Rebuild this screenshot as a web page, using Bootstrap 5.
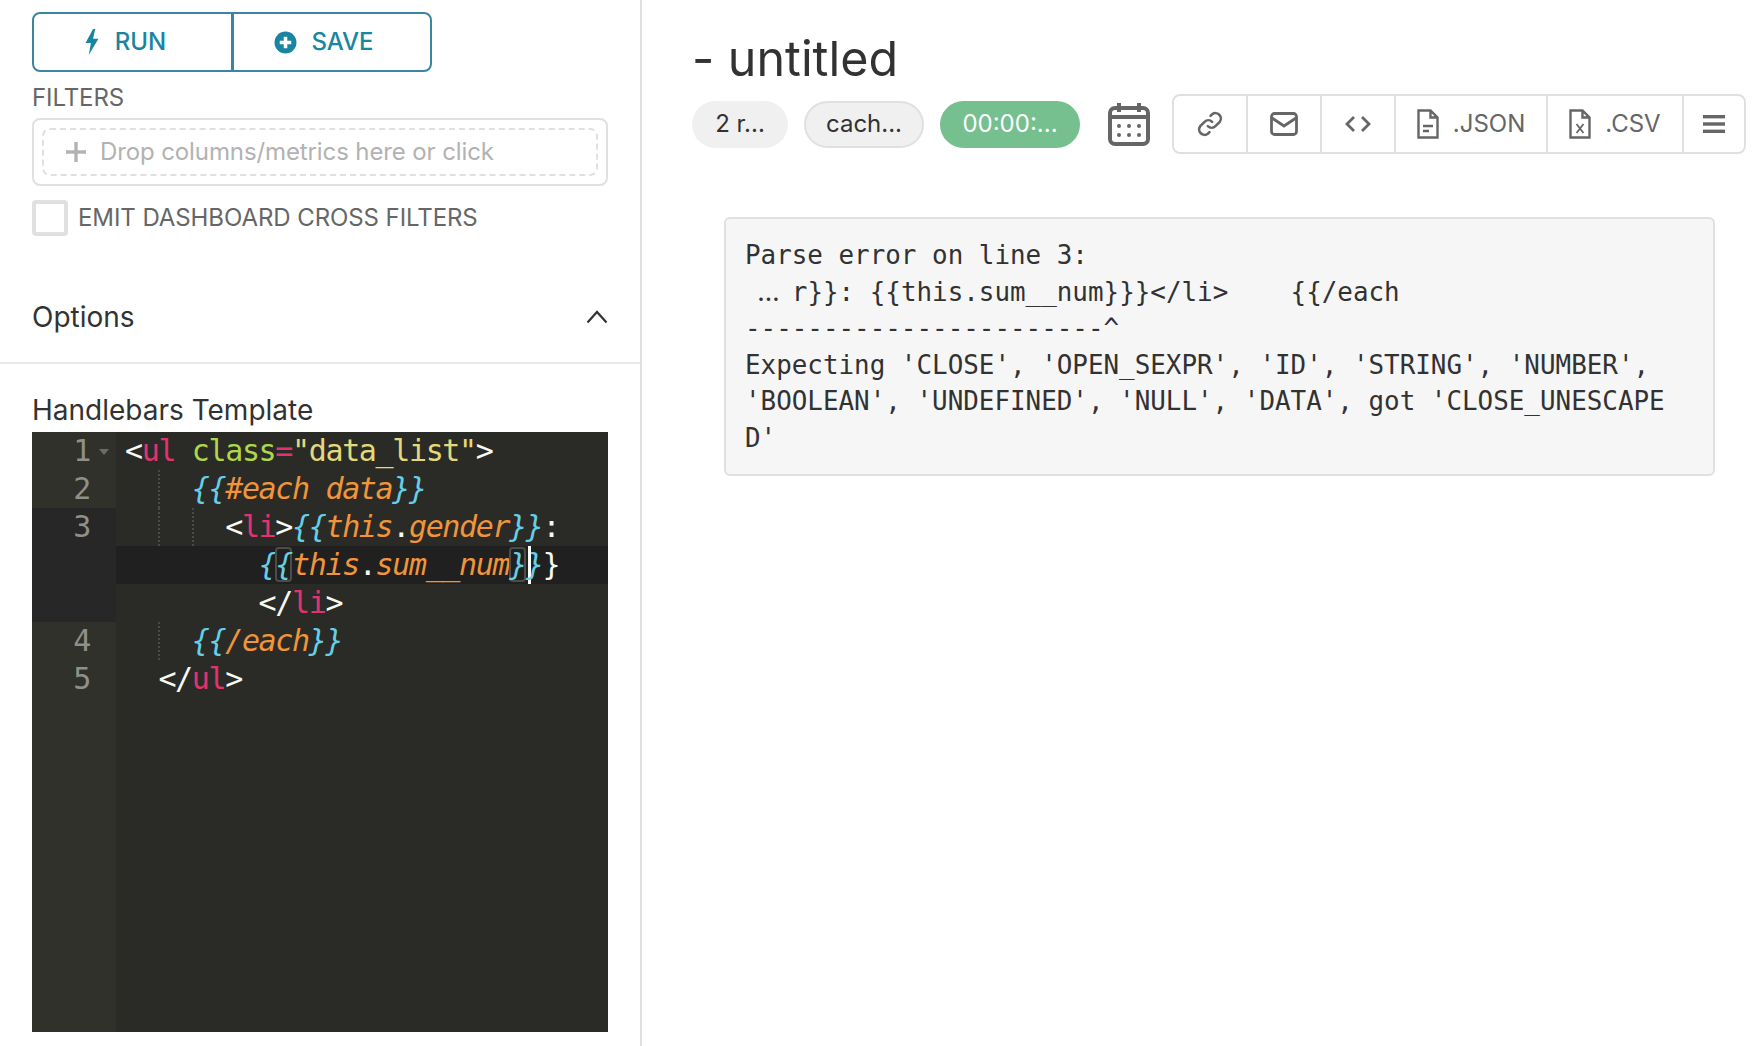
<!DOCTYPE html>
<html lang="en">
<head>
<meta charset="utf-8">
<title>untitled</title>
<link href="https://cdn.jsdelivr.net/npm/bootstrap@5.3.0/dist/css/bootstrap.min.css" rel="stylesheet">
<style>
html,body{height:100%;overflow:hidden}
body{font-family:Inter,"Liberation Sans",sans-serif;color:#323232;background:#fff}
.shell{height:1046px}
.side{width:642px;flex:none;border-right:2px solid #e0e0e0}
.side-top{padding:12px 32px 0 32px}
.run-group{width:400px;height:60px}
.run-group .btn{--bs-btn-color:#1a85a0;--bs-btn-border-color:#3b85a0;--bs-btn-hover-color:#1a85a0;--bs-btn-hover-bg:#fff;--bs-btn-hover-border-color:#3b85a0;--bs-btn-border-width:2px;--bs-btn-border-radius:8px;font-size:24px;font-weight:500;text-transform:uppercase;gap:14px;flex:none;padding:0 16px 0 0}
.run-group .btn:first-child{width:201px}
.run-group .btn:last-child{width:200px}
.lbl{font-size:24px;line-height:30px;color:#666;text-transform:uppercase;letter-spacing:-.08px}
.f-title{margin-top:11px}
.drop-box{height:68px;border:2px solid #e0e0e0;border-radius:8px;padding:8px;margin-top:5px}
.drop-inner{height:48px;border:2px dashed #e0e0e0;border-radius:8px;padding-left:22px;gap:14px;color:#b2b2b2;font-size:24px;letter-spacing:-.11px}
.chk-row{margin-top:14px;gap:10px}
.chk-box{width:36px;height:36px;border:4px solid #e0e0e0;border-radius:4px;flex:none}
.opt-head{margin-top:63px;padding:0 32px 28px;border-bottom:2px solid #e8e8e8;font-size:28px;height:35px;box-sizing:content-box}
.tpl-label{font-size:28px;line-height:34px;padding:29px 32px 0;color:#323232}
.ed{margin:5px 32px 0;height:600px;background:#2a2b26;font-family:"DejaVu Sans Mono",monospace;font-size:30px;letter-spacing:-1.36px;line-height:38px;color:#f8f8f2;display:flex;flex-direction:column;overflow:hidden;white-space:pre}
.ln{display:flex}
.ln-fill{flex:1;display:flex}
.gut{width:84px;flex:none;background:#30312a;color:#8f908a;text-align:right;padding-right:26px;position:relative}
.gut.act{background:#272727}
.gut .fold{position:absolute;right:7px;top:17px;width:0;height:0;border:5px solid transparent;border-top:6px solid #6b6c66}
.cod{flex:1;padding-left:9px;position:relative}
.vl{height:38px}
.vl.act{background:#202020;margin-left:-9px;padding-left:9px}
.guide{position:absolute;top:0;width:0;border-left:2px dotted #4a4b45;height:38px}
.g2{left:42px}.g4{left:76px}
.t{color:#e3336f}.a{color:#afd74a}.s{color:#e4d97a}.o{color:#f0953a;font-style:italic}.b{color:#66cfe8;font-style:italic}
.bm{box-shadow:inset 0 0 0 2px #4c4d47;border-radius:4px}
.caret{display:inline-block;width:0;height:38px;border-left:3px solid #fff;margin-left:2px;margin-right:-5px;vertical-align:top}
.mainp{flex:1;min-width:0;padding:0 15px 0 50px}
.ttl{font-size:48.4px;line-height:58px;margin:0;padding-top:30px;font-weight:400;color:#323232}
.tools{margin-top:6px;align-items:center}
.tools>*{flex:none}
.pill-x{height:47px;border-radius:24px;background:#f0f0f0;color:#323232;font-size:24px;display:flex;align-items:center;justify-content:center}
.pill-a{width:96px}
.pill-b{width:120px;margin-left:16px;border:2px solid #e0e0e0}
.pill-c{width:140px;margin-left:16px;background:#76bf8e;color:#fff}
.cal-ico{margin:0 22px 0 28px}
.bar-group{height:60px;border:2px solid #e0e0e0;border-radius:8px;color:#666;font-size:24px}
.bar-cell{display:flex;align-items:center;justify-content:center;gap:14px;border-right:2px solid #e0e0e0}
.bar-cell:last-child{border-right:0}
.w-ico{width:74px}.w-json{width:152px}.w-csv{width:136px}.w-menu{width:60px}
.err{margin:63px 30px 0 32px;background:#f6f6f6;border:2px solid #e0e0e0;border-radius:6px;padding:18px 19px;height:259px;font-family:"DejaVu Sans Mono",monospace;font-size:25.9px;line-height:36.6px;color:#323232;white-space:pre;overflow:hidden}
.dots{display:inline-block;width:46.8px;text-align:center;font-family:Inter,sans-serif}
</style>
</head>
<body>
<div class="shell d-flex">
  <aside class="side">
    <div class="side-top">
      <div class="btn-group run-group" role="group">
        <button type="button" class="btn d-flex align-items-center justify-content-center">
          <svg width="18" height="28" viewBox="0 0 16 26"><path d="M9 1 2 14h5l-2 11 9-15H9l2-9z" fill="#1a85a0"/></svg>RUN</button>
        <button type="button" class="btn d-flex align-items-center justify-content-center">
          <svg width="23" height="23" viewBox="0 0 22 22"><circle cx="11" cy="11" r="10.5" fill="#1a85a0"/><path d="M11 5.5v11M5.5 11h11" stroke="#fff" stroke-width="3.4"/></svg>SAVE</button>
      </div>
      <div class="lbl f-title">Filters</div>
      <div class="drop-box">
        <div class="drop-inner d-flex align-items-center">
          <svg width="20" height="20" viewBox="0 0 20 20"><path d="M10 0v20M0 10h20" stroke="#b2b2b2" stroke-width="3.4"/></svg>
          <span>Drop columns/metrics here or click</span>
        </div>
      </div>
      <div class="chk-row d-flex align-items-center">
        <span class="chk-box"></span><span class="lbl">Emit dashboard cross filters</span>
      </div>
    </div>
    <div class="opt-head d-flex justify-content-between align-items-center">
      <span>Options</span>
      <svg width="22" height="14" viewBox="0 0 22 14"><path d="M1.5 12.5 11 2l9.5 10.5" fill="none" stroke="#323232" stroke-width="2.2"/></svg>
    </div>
    <div class="tpl-label">Handlebars Template</div>
    <div class="ed">
      <div class="ln"><div class="gut">1<span class="fold"></span></div><div class="cod">&lt;<span class="t">ul</span> <span class="a">class</span><span class="t">=</span><span class="s">"data_list"</span>&gt;</div></div>
      <div class="ln"><div class="gut">2</div><div class="cod"><i class="guide g2"></i>    <span class="b">{{</span><span class="o">#each data</span><span class="b">}}</span></div></div>
      <div class="ln"><div class="gut act">3</div><div class="cod"><i class="guide g2"></i><i class="guide g4"></i><div class="vl">      &lt;<span class="t">li</span>&gt;<span class="b">{{</span><span class="o">this</span>.<span class="o">gender</span><span class="b">}}</span>:</div><div class="vl act">        <span class="b">{<span class="bm">{</span></span><span class="o">this</span>.<span class="o">sum__num</span><span class="b"><span class="bm">}</span><span class="caret"></span>}</span>}</div><div class="vl">        &lt;/<span class="t">li</span>&gt;</div></div></div>
      <div class="ln"><div class="gut">4</div><div class="cod"><i class="guide g2"></i>    <span class="b">{{</span><span class="o">/each</span><span class="b">}}</span></div></div>
      <div class="ln"><div class="gut">5</div><div class="cod">  &lt;/<span class="t">ul</span>&gt;</div></div>
      <div class="ln-fill"><div class="gut"></div><div class="cod"></div></div>
    </div>
  </aside>
  <main class="mainp">
    <h1 class="ttl">- untitled</h1>
    <div class="tools d-flex">
      <span class="pill-x pill-a">2 r...</span>
      <span class="pill-x pill-b">cach...</span>
      <span class="pill-x pill-c">00:00:...</span>
      <svg class="cal-ico" width="42" height="44" viewBox="0 0 42 44"><rect x="2" y="6" width="38" height="36" rx="5" fill="none" stroke="#666" stroke-width="4"/><path d="M2 15h38M11 1v9M31 1v9" stroke="#666" stroke-width="4"/><g fill="#666"><circle cx="11" cy="24" r="2"/><circle cx="21" cy="24" r="2"/><circle cx="31" cy="24" r="2"/><circle cx="11" cy="33" r="2"/><circle cx="21" cy="33" r="2"/><circle cx="31" cy="33" r="2"/></g></svg>
      <div class="bar-group d-flex">
        <div class="bar-cell w-ico"><svg width="26" height="26" viewBox="0 0 24 24" fill="none" stroke="#666" stroke-width="2.4" stroke-linecap="round"><path d="M10 14a5 5 0 0 0 7 0l4-4a5 5 0 0 0-7-7l-1.5 1.5"/><path d="M14 10a5 5 0 0 0-7 0l-4 4a5 5 0 0 0 7 7l1.5-1.5"/></svg></div>
        <div class="bar-cell w-ico"><svg width="28" height="24" viewBox="0 0 28 24" fill="none" stroke="#666" stroke-width="2.8"><rect x="1.5" y="1.5" width="25" height="21" rx="3"/><path d="M2 6l12 8 12-8"/></svg></div>
        <div class="bar-cell w-ico"><svg width="26" height="18" viewBox="0 0 26 18" fill="none" stroke="#666" stroke-width="2.8"><path d="M9 2 2 9l7 7M17 2l7 7-7 7"/></svg></div>
        <div class="bar-cell w-json"><svg width="22" height="30" viewBox="0 0 22 30" fill="none" stroke="#666" stroke-width="2.4"><path d="M1.5 1.5h12l7 7v20h-19zM13.5 1.5v7h7"/><path d="M6 17h10M6 22h6"/></svg><span>.JSON</span></div>
        <div class="bar-cell w-csv"><svg width="22" height="30" viewBox="0 0 22 30" fill="none" stroke="#666" stroke-width="2.4"><path d="M1.5 1.5h12l7 7v20h-19zM13.5 1.5v7h7"/><path d="M7.5 15l7 9M14.5 15l-7 9" stroke-width="1.8"/></svg><span>.CSV</span></div>
        <div class="bar-cell w-menu"><svg width="22" height="18" viewBox="0 0 22 18" fill="#666"><rect width="22" height="3.4"/><rect y="7.3" width="22" height="3.4"/><rect y="14.6" width="22" height="3.4"/></svg></div>
      </div>
    </div>
    <div class="err"><div>Parse error on line 3:</div><div><span class="dots">…</span>r}}: {{this.sum__num}}}&lt;/li&gt;    {{/each</div><div>-----------------------^</div><div>Expecting 'CLOSE', 'OPEN_SEXPR', 'ID', 'STRING', 'NUMBER',</div><div>'BOOLEAN', 'UNDEFINED', 'NULL', 'DATA', got 'CLOSE_UNESCAPE</div><div>D'</div></div>
  </main>
</div>
<script src="https://cdn.jsdelivr.net/npm/bootstrap@5.3.0/dist/js/bootstrap.bundle.min.js"></script>
</body>
</html>
